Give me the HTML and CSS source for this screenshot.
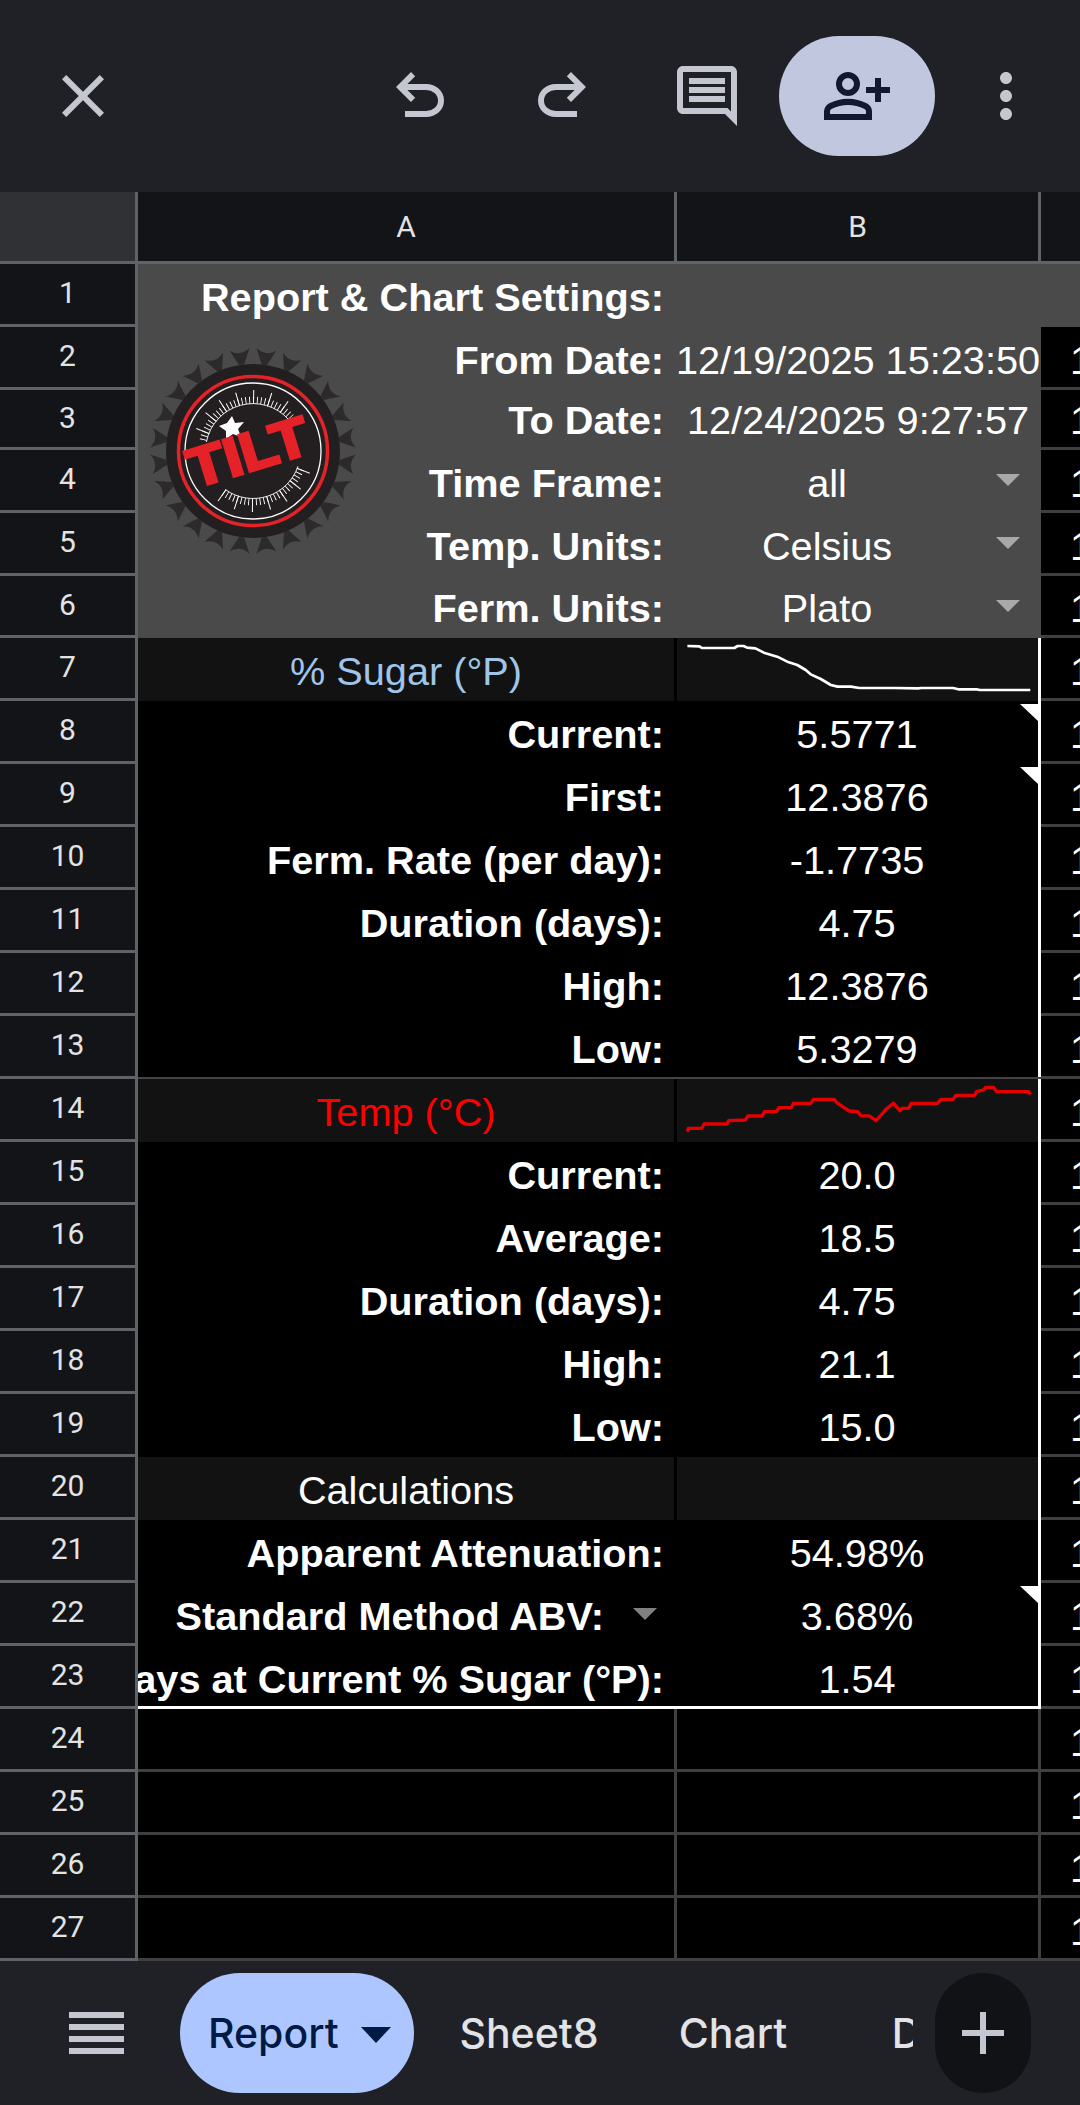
FILE: index.html
```html
<!DOCTYPE html>
<html lang="en">
<head>
<meta charset="utf-8">
<title>Report</title>
<link rel="stylesheet" href="styles.css">
</head>
<body>
<div class="app">
  <header class="topbar">
    <svg class="icon close" viewBox="0 0 24 24"><path d="M19 6.41 17.59 5 12 10.59 6.41 5 5 6.41 10.59 12 5 17.59 6.41 19 12 13.41 17.59 19 19 17.59 13.41 12z"/></svg>
    <svg class="icon undo" viewBox="0 -960 960 960"><path d="M280-200v-80h284q63 0 109.5-40T720-420q0-60-46.5-100T564-560H312l104 104-56 56-200-200 200-200 56 56-104 104h252q97 0 166.5 63T800-420q0 94-69.5 157T564-200H280Z"/></svg>
    <svg class="icon redo" viewBox="0 -960 960 960"><path d="M396-200q-97 0-166.5-63T160-420q0-94 69.5-157T396-640h252L544-744l56-56 200 200-200 200-56-56 104-104H396q-63 0-109.5 40T240-420q0 60 46.5 100T396-280h284v80H396Z"/></svg>
    <svg class="icon comment" viewBox="0 0 24 24"><path d="M21.99 4c0-1.1-.89-2-1.99-2H4c-1.1 0-2 .9-2 2v12c0 1.1.9 2 2 2h14l4 4-.01-18zM20 4v13.17L18.83 16H4V4h16zM6 12h12v2H6zm0-3h12v2H6zm0-3h12v2H6z"/></svg>
    <div class="share"><svg class="icon share-icon" viewBox="0 -960 960 960"><path d="M720-400v-120H600v-80h120v-120h80v120h120v80H800v120h-80Zm-360-80q-66 0-113-47t-47-113q0-66 47-113t113-47q66 0 113 47t47 113q0 66-47 113t-113 47ZM40-160v-112q0-34 17.5-62.5T104-380q62-31 126-46.5T360-442q66 0 130 15.5T616-380q29 15 46.5 43.5T680-272v112H40Zm80-80h480v-32q0-11-5.5-20T580-306q-54-27-109-40.5T360-360q-56 0-111 13.5T140-306q-9 5-14.5 14t-5.5 20v32Zm240-320q33 0 56.5-23.5T440-640q0-33-23.5-56.5T360-720q-33 0-56.5 23.5T280-640q0 33 23.5 56.5T360-560Z"/></svg></div>
    <svg class="icon more" viewBox="0 0 24 24"><path d="M12 8c1.1 0 2-.9 2-2s-.9-2-2-2-2 .9-2 2 .9 2 2 2zm0 2c-1.1 0-2 .9-2 2s.9 2 2 2 2-.9 2-2-.9-2-2-2zm0 6c-1.1 0-2 .9-2 2s.9 2 2 2 2-.9 2-2-.9-2-2-2z"/></svg>
  </header>

  <main class="sheet">
    <div class="corner"></div><div class="colhead a">A</div><div class="colhead b">B</div><div class="colhead c"></div>

    <div class="rh">1</div><div class="cell grey lbl">Report &amp; Chart Settings:</div><div class="cell grey"></div><div class="cc grey"></div>
    <div class="rh">2</div><div class="cell grey lbl">From Date:</div><div class="cell grey val clip">12/19/2025 15:23:50</div><div class="cc">1</div>
    <div class="rh">3</div><div class="cell grey lbl">To Date:</div><div class="cell grey val clip">12/24/2025 9:27:57</div><div class="cc">1</div>
    <div class="rh">4</div><div class="cell grey lbl">Time Frame:</div><div class="cell grey val drop">all<i class="caret"></i></div><div class="cc">1</div>
    <div class="rh">5</div><div class="cell grey lbl">Temp. Units:</div><div class="cell grey val drop">Celsius<i class="caret"></i></div><div class="cc">1</div>
    <div class="rh">6</div><div class="cell grey lbl">Ferm. Units:</div><div class="cell grey val drop">Plato<i class="caret"></i></div><div class="cc">1</div>

    <div class="rh">7</div><div class="cell band ttl blue">% Sugar (°P)</div><div class="cell band sel spark"><svg class="spark-svg" viewBox="51 54 1086 189" preserveAspectRatio="none"><polyline class="line-w" points="82,78 118,79 125,84 222,84 232,78 250,78 260,83 285,85 310,98 350,110 380,125 410,135 435,150 450,163 480,177 510,195 530,200 570,200 595,204 690,204 700,204 770,205 780,204 875,204 890,208 945,208 955,210 1105,210"/></svg></div><div class="cc">1</div>
    <div class="rh">8</div><div class="cell lbl">Current:</div><div class="cell val sel note">5.5771</div><div class="cc">1</div>
    <div class="rh">9</div><div class="cell lbl">First:</div><div class="cell val sel note">12.3876</div><div class="cc">1</div>
    <div class="rh">10</div><div class="cell lbl">Ferm. Rate (per day):</div><div class="cell val sel">-1.7735</div><div class="cc">1</div>
    <div class="rh">11</div><div class="cell lbl">Duration (days):</div><div class="cell val sel">4.75</div><div class="cc">1</div>
    <div class="rh">12</div><div class="cell lbl">High:</div><div class="cell val sel">12.3876</div><div class="cc">1</div>
    <div class="rh">13</div><div class="cell lbl ruled">Low:</div><div class="cell val sel ruled">5.3279</div><div class="cc">1</div>

    <div class="rh">14</div><div class="cell band ttl red">Temp (°C)</div><div class="cell band sel spark"><svg class="spark-svg" viewBox="51 57 1086 189" preserveAspectRatio="none"><polyline class="line-r" points="82,215 85,205 125,205 132,192 200,192 205,182 255,180 262,168 305,168 312,155 348,155 355,143 392,143 398,130 450,130 458,118 520,118 528,128 545,140 565,153 590,155 600,167 625,168 645,182 660,165 675,147 697,130 716,152 722,145 742,145 750,130 828,130 838,118 875,118 883,106 938,106 945,95 965,90 972,82 995,82 1005,95 1100,95 1105,104"/></svg></div><div class="cc">1</div>
    <div class="rh">15</div><div class="cell lbl">Current:</div><div class="cell val sel">20.0</div><div class="cc">1</div>
    <div class="rh">16</div><div class="cell lbl">Average:</div><div class="cell val sel">18.5</div><div class="cc">1</div>
    <div class="rh">17</div><div class="cell lbl">Duration (days):</div><div class="cell val sel">4.75</div><div class="cc">1</div>
    <div class="rh">18</div><div class="cell lbl">High:</div><div class="cell val sel">21.1</div><div class="cc">1</div>
    <div class="rh">19</div><div class="cell lbl">Low:</div><div class="cell val sel">15.0</div><div class="cc">1</div>

    <div class="rh">20</div><div class="cell band ttl">Calculations</div><div class="cell band sel"></div><div class="cc">1</div>
    <div class="rh">21</div><div class="cell lbl">Apparent Attenuation:</div><div class="cell val sel">54.98%</div><div class="cc">1</div>
    <div class="rh">22</div><div class="cell lbl has-drop">Standard Method ABV:<i class="caret dim"></i></div><div class="cell val sel note">3.68%</div><div class="cc">1</div>
    <div class="rh">23</div><div class="cell lbl last">Days at Current % Sugar (°P):</div><div class="cell val sel last">1.54</div><div class="cc">1</div>

    <div class="rh">24</div><div class="cell empty"></div><div class="cell empty"></div><div class="cc">1</div>
    <div class="rh">25</div><div class="cell empty"></div><div class="cell empty"></div><div class="cc">1</div>
    <div class="rh">26</div><div class="cell empty"></div><div class="cell empty"></div><div class="cc">1</div>
    <div class="rh">27</div><div class="cell empty"></div><div class="cell empty"></div><div class="cc">1</div>

    <svg class="logo" viewBox="0 0 210 210" aria-label="Tilt logo">
      <g class="spikes" transform="translate(105 105)">
        <path id="sp" d="M-10 -102.5Q0 -95 10 -102.5Q6 -94 2.500 -87L-2.500 -87Q-6 -94 -10 -102.500Z" transform="rotate(7.5)"/>
        <use href="#sp" transform="rotate(15)"/><use href="#sp" transform="rotate(30)"/><use href="#sp" transform="rotate(45)"/>
        <use href="#sp" transform="rotate(60)"/><use href="#sp" transform="rotate(75)"/><use href="#sp" transform="rotate(90)"/>
        <use href="#sp" transform="rotate(105)"/><use href="#sp" transform="rotate(120)"/><use href="#sp" transform="rotate(135)"/>
        <use href="#sp" transform="rotate(150)"/><use href="#sp" transform="rotate(165)"/><use href="#sp" transform="rotate(180)"/>
        <use href="#sp" transform="rotate(195)"/><use href="#sp" transform="rotate(210)"/><use href="#sp" transform="rotate(225)"/>
        <use href="#sp" transform="rotate(240)"/><use href="#sp" transform="rotate(255)"/><use href="#sp" transform="rotate(270)"/>
        <use href="#sp" transform="rotate(285)"/><use href="#sp" transform="rotate(300)"/><use href="#sp" transform="rotate(315)"/>
        <use href="#sp" transform="rotate(330)"/><use href="#sp" transform="rotate(345)"/>
      </g>
      <circle class="disc" cx="105" cy="105" r="87"/>
      <circle class="ring-r" cx="105" cy="105" r="74.500"/>
      <circle class="ring-w" cx="105" cy="105" r="68"/>
      <path class="base" d="M58.400 96A47.500 47.500 0 0 1 140.400 73.400"/>
      <path class="base" d="M150 120.300A47.500 47.500 0 0 1 77.500 143.700"/>
      <path class="tick-s up" d="M54.900 95.300A51 51 0 0 1 143 71.100" pathLength="127"/>
      <path class="tick-l up" d="M52 94.700A54 54 0 0 1 145.300 69.100" pathLength="127"/>
      <path class="tick-s down" d="M153.200 121.500A51 51 0 0 1 75.500 146.600" pathLength="106.500"/>
      <path class="tick-l down" d="M156.100 122.400A54 54 0 0 1 73.700 149" pathLength="106.500"/>
      <polygon class="star" points="84,70 87,77 96,76 90,83 93,91 85,88 78,93 78,85 71,80 79,77"/>
      <text class="tilt" x="100" y="125" text-anchor="middle" textLength="124" lengthAdjust="spacingAndGlyphs" transform="rotate(-17 100 105)">TILT</text>
    </svg>
  </main>

  <footer class="bottombar">
    <svg class="menu" viewBox="0 0 55 42"><rect width="55" height="6"/><rect y="12" width="55" height="6"/><rect y="24" width="55" height="6"/><rect y="36" width="55" height="6"/></svg>
    <div class="tabs">
      <div class="tab active">Report<i class="tab-caret"></i></div>
      <div class="tab">Sheet8</div>
      <div class="tab">Chart</div>
      <div class="tab">Data</div>
    </div>
    <div class="add"><svg class="add-icon" viewBox="0 0 42 42"><path d="M18 0h6v18h18v6H24v18h-6V24H0v-6h18z"/></svg></div>
  </footer>
</div>
</body>
</html>
```
FILE: styles.css
```css
* { box-sizing: border-box; }
html, body { margin: 0; padding: 0; background: #000; }
body { width: 1080px; height: 2105px; overflow: hidden; }
.app { width: 1080px; height: 2105px; display: flex; flex-direction: column; font-family: "Liberation Sans", Arial, sans-serif; }

/* top bar */
.topbar { height: 192px; flex: none; background: #1f2127; display: flex; align-items: center; padding-left: 47px; }
.icon { width: 72px; height: 72px; flex: none; fill: #c4c6d0; }
.undo { margin-left: 265px; }
.redo { margin-left: 70px; }
.comment { margin-left: 73px; }
.share { width: 156px; height: 120px; margin-left: 36px; border-radius: 60px; background: #c1c7de; display: flex; align-items: center; justify-content: center; flex: none; }
.share-icon { fill: #11192e; }
.more { margin-left: 35px; }

/* sheet */
.sheet { position: relative; flex: none; height: 1769px; display: grid; overflow: hidden; background: #000;
  grid-template-columns: 138px 539px 364px 39px;
  grid-template-rows: 72px 63px 63px 60px 63px 63px 62px repeat(21, 63px); }
.corner { background: #303134; border-right: 3px solid #5f6368; border-bottom: 3px solid #5f6368; }
.colhead { background: #131418; border-bottom: 3px solid #5f6368; color: #e3e3e3; font: 400 30px Roboto, sans-serif; display: flex; align-items: center; justify-content: center; }
.colhead.a, .colhead.b { border-right: 3px solid #5f6368; }
.rh { background: #131418; border-right: 3px solid #5f6368; border-bottom: 3px solid #5f6368; color: #e3e3e3; font: 400 30px Roboto, sans-serif; display: flex; align-items: center; justify-content: center; padding-bottom: 3px; }
.cell { position: relative; background: #000; color: #fff; font-size: 39.7px; white-space: nowrap; overflow: hidden; display: flex; align-items: flex-end; padding-bottom: 7px; line-height: 46px; }
.grey { background: #4a4a4a; }
.lbl { justify-content: flex-end; font-weight: 700; padding-right: 13px; }
.val { justify-content: center; padding-right: 4px; }
.drop { padding-right: 64px; }
.clip { padding-right: 2px; }
.band { background: #121212; }
.ttl { justify-content: center; box-shadow: inset -3px 0 0 #000; padding-bottom: 7px; padding-right: 3px; }
.blue { color: #9fc5e8; }
.red { color: #f00; }
.sel { box-shadow: inset -3px 0 0 #fff; }
.grey.val { box-shadow: none; }
.ruled { border-bottom: 2px solid #444; padding-bottom: 5px; }
.last { border-bottom: 3px solid #fff; padding-bottom: 4px; }
.empty { border-right: 3px solid #3f3f3f; border-bottom: 3px solid #3f3f3f; }
.cc { background: #000; color: #fff; font-size: 39.7px; line-height: 46px; border-bottom: 3px solid #3f3f3f; padding-left: 29px; overflow: hidden; display: flex; align-items: flex-end; padding-bottom: 4px; }
.cc.grey { background: #4a4a4a; border: 0; }
.spark { padding: 0; display: block; }
.spark-svg { display: block; width: 100%; height: 100%; }
.line-w, .line-r { fill: none; stroke-linejoin: round; }
.line-w { stroke: #fff; stroke-width: 8; }
.line-r { stroke: #e50000; stroke-width: 10; }

/* note triangle */
.note::after { content: ""; position: absolute; top: 3px; right: 3px; border-top: 17px solid #fff; border-left: 18px solid transparent; }

/* data validation caret */
.caret { position: absolute; right: 21px; top: 24px; border-top: 12px solid #a9a9a9; border-left: 12px solid transparent; border-right: 12px solid transparent; }
.has-drop { padding-right: 73px; }
.caret.dim { right: 20px; top: 25px; border-top-color: #808080; }

/* logo */
.logo { position: absolute; left: 148px; top: 154px; width: 210px; height: 210px; }
.spikes { fill: #2c2a2a; }
.disc { fill: #231f20; }
.ring-r { fill: none; stroke: #e42228; stroke-width: 3.5; }
.ring-w { fill: none; stroke: #fff; stroke-width: 1.3; }
.base { fill: none; stroke: #fff; stroke-width: 0.9; }
.tick-s, .tick-l { fill: none; stroke: #fff; }
.tick-s { stroke-width: 7; stroke-dasharray: 1 3.3; }
.tick-l { stroke-width: 14; stroke-dasharray: 1 16.200; }
.tick-s.up { stroke-dashoffset: -1.6; }
.tick-l.up { stroke-dashoffset: -10.2; }
.tick-s.down { stroke-dashoffset: -2.3; }
.tick-l.down { stroke-dashoffset: -2.3; }
.star { fill: #fff; }
.tilt { fill: #e42228; stroke: #e42228; stroke-width: 3; font: 700 55px "Liberation Sans", sans-serif; }

/* bottom */
.bottombar { position: relative; flex: none; height: 144px; background: #1f2127; display: flex; align-items: center; padding-left: 69px; }
.menu { width: 55px; height: 42px; fill: #c4c6d0; flex: none; }
.tabs { width: 733px; margin-left: 56px; height: 120px; flex: none; display: flex; align-items: center; overflow: hidden; color: #e3e3e5; font: 500 41px "Inter", sans-serif; }
.tab { flex: none; width: 204px; text-align: center; }
.tab.active { width: 234px; height: 120px; padding-left: 28px; margin-right: 13px; border-radius: 60px; background: #aec6ff; color: #001a43; display: flex; align-items: center; gap: 22px; }
.tab-caret { border-top: 16px solid #001a43; border-left: 15px solid transparent; border-right: 15px solid transparent; margin-top: 4px; }
.add { width: 96px; height: 120px; margin-left: 22px; border-radius: 48px; background: #101215; flex: none; display: flex; align-items: center; justify-content: center; }
.add-icon { width: 42px; height: 42px; fill: #c4c6d0; }
```
